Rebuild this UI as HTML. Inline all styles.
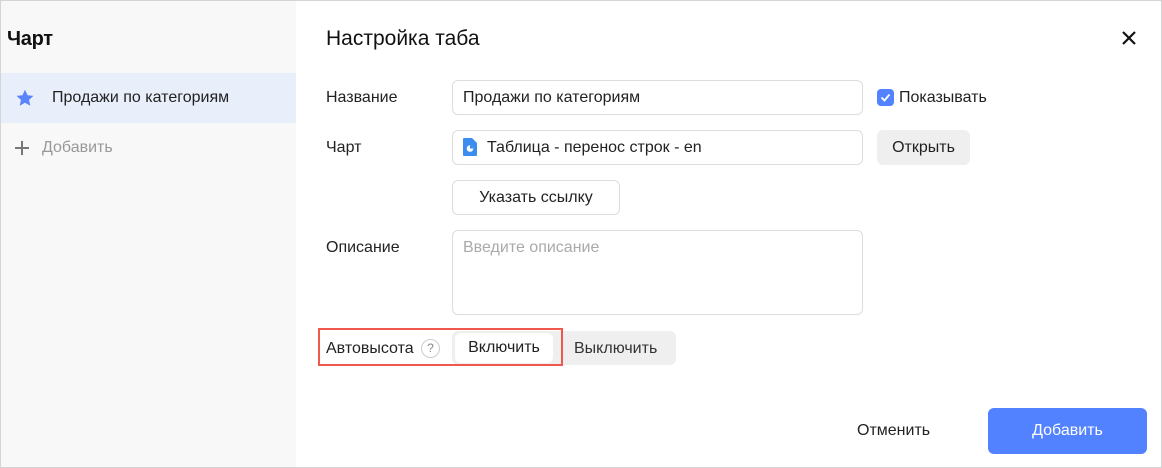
<!DOCTYPE html>
<html><head><meta charset="utf-8"><style>
*{box-sizing:border-box;margin:0;padding:0}
body{width:1162px;height:468px;font-family:"Liberation Sans",sans-serif;color:#222;background:#fff;position:relative;overflow:hidden;font-size:16px}
.frame{position:absolute;left:0;top:0;width:1162px;height:468px;border:1px solid #d4d4d4}
.side{position:absolute;left:1px;top:1px;width:295px;height:466px;background:#f8f8f8}
.abs{position:absolute;white-space:nowrap}
.inp{position:absolute;border:1px solid #ddd;border-radius:6px;background:#fff;font-size:16px;padding-left:10px;line-height:33px}
.btn{position:absolute;border-radius:6px;text-align:center;font-size:16px}
</style></head><body>
<div class="side">
<div class="abs" style="left:6px;top:27px;font-size:20px;font-weight:bold;color:#111;letter-spacing:-0.3px">Чарт</div>
<div style="position:absolute;left:0;top:72px;width:295px;height:50px;background:#e8eefa"></div>
<svg class="abs" style="left:14px;top:88px" width="20" height="18" viewBox="0 0 24 23"><path d="M12 1l3.3 7 7.5.8-5.6 5.1 1.6 7.5L12 17.6l-6.8 3.8 1.6-7.5L1.2 8.8l7.5-.8z" fill="#5a84f9"/></svg>
<div class="abs" style="left:51px;top:88px;color:#222">Продажи по категориям</div>
<svg class="abs" style="left:13px;top:139px" width="16" height="16"><path d="M8 1v14M1 8h14" stroke="#777" stroke-width="2"/></svg>
<div class="abs" style="left:41px;top:138px;color:#999">Добавить</div>
</div>
<div class="abs" style="left:326px;top:27px;font-size:21px;color:#111">Настройка таба</div>
<svg class="abs" style="left:1121px;top:30px" width="16" height="16"><path d="M2 2l12 12M14 2L2 14" stroke="#111" stroke-width="2.2"/></svg>
<div class="abs" style="left:326px;top:89px">Название</div>
<div class="inp" style="left:452px;top:80px;width:411px;height:35px">Продажи по категориям</div>
<div class="abs" style="left:877px;top:89px;width:17px;height:17px;background:#5282ff;border-radius:4px"></div>
<svg class="abs" style="left:877px;top:89px" width="17" height="17"><path d="M4.5 8.5l3 3 5-6" stroke="#fff" stroke-width="1.8" fill="none"/></svg>
<div class="abs" style="left:899px;top:89px">Показывать</div>
<div class="abs" style="left:326px;top:139px">Чарт</div>
<div class="inp" style="left:452px;top:130px;width:411px;height:35px;padding-left:34px">Таблица - перенос строк - en</div>
<svg class="abs" style="left:463px;top:138px" width="14" height="18" viewBox="0 0 14 18"><path d="M1 0h8l5 5v12a1 1 0 0 1-1 1H1a1 1 0 0 1-1-1V1a1 1 0 0 1 1-1z" fill="#3b8ef0"/><circle cx="7" cy="10.5" r="3.3" fill="#fff"/><path d="M7 10.5V7.2a3.3 3.3 0 0 1 3.3 3.3z" fill="#3b8ef0"/></svg>
<div class="btn" style="left:877px;top:130px;width:93px;height:35px;background:#efefef;line-height:35px">Открыть</div>
<div class="btn" style="left:452px;top:180px;width:168px;height:35px;border:1px solid #ddd;line-height:33px">Указать ссылку</div>
<div class="abs" style="left:326px;top:239px">Описание</div>
<div class="inp" style="left:452px;top:230px;width:411px;height:85px;line-height:normal;padding-top:8px;color:#aaa">Введите описание</div>
<div class="abs" style="left:326px;top:340px">Автовысота</div>
<div class="abs" style="left:421px;top:339px;width:19px;height:19px;border:1px solid #ccc;border-radius:50%;font-size:12px;text-align:center;line-height:17px;color:#888">?</div>
<div style="position:absolute;left:452px;top:331px;width:224px;height:34px;background:#efefef;border-radius:6px"></div>
<div class="btn" style="left:455px;top:333px;width:98px;height:30px;background:#fff;line-height:30px">Включить</div>
<div class="abs" style="left:574px;top:340px;color:#333">Выключить</div>
<div style="position:absolute;left:318px;top:328px;width:245px;height:38px;border:2px solid #f0574d"></div>
<div class="abs" style="left:857px;top:422px">Отменить</div>
<div class="btn" style="left:988px;top:408px;width:159px;height:46px;background:#5282ff;color:#fff;line-height:46px;font-size:16px">Добавить</div>
<div class="frame"></div>
</body></html>
